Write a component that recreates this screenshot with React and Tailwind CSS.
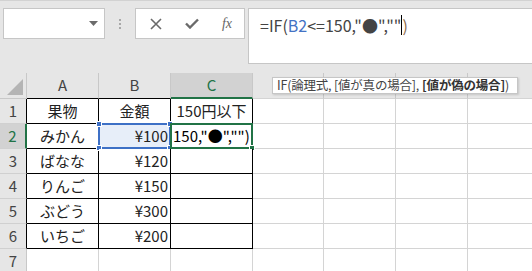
import React from "react";

const FONT = { fontFamily: '"Noto Sans CJK JP", "Noto Sans", sans-serif' };

const fruits = [
  ["果物", "金額", "150円以下"],
  ["みかん", "¥100", ""],
  ["ばなな", "¥120", ""],
  ["りんご", "¥150", ""],
  ["ぶどう", "¥300", ""],
  ["いちご", "¥200", ""],
];

function Handle({ className }) {
  return <div className={"absolute w-[6px] h-[6px] " + className} />;
}

export default function App() {
  return (
    <div className="w-[532px] h-[271px] overflow-hidden bg-[#e6e6e6] text-[#222]" style={FONT}>
      {/* formula bar area */}
      <div className="h-[73px] border-t border-[#d2d2d2] pt-[7px] pl-[3px] flex items-start">
        <div className="w-[102px] h-[31px] bg-white border border-[#c6c6c6] flex items-center justify-end pr-[6px]">
          <svg width="9" height="5" viewBox="0 0 9 5"><path d="M0 0h9L4.5 5z" fill="#6b6b6b" /></svg>
        </div>
        <div className="w-[30px] h-[31px] flex flex-col items-center justify-center gap-[2px]">
          <div className="w-[2px] h-[2px] bg-[#a8a8a8]" />
          <div className="w-[2px] h-[2px] bg-[#a8a8a8]" />
          <div className="w-[2px] h-[2px] bg-[#a8a8a8]" />
        </div>
        <div className="w-[110px] h-[31px] bg-white border border-[#c6c6c6] flex items-center">
          <div className="w-[37px] flex justify-center pl-[2px]">
            <svg width="12" height="12" viewBox="0 0 12 12"><path d="M1 1l10 10M11 1L1 11" stroke="#6a6a6a" strokeWidth="1.6" /></svg>
          </div>
          <div className="w-[37px] flex justify-center">
            <svg width="14" height="11" viewBox="0 0 14 11"><path d="M1 5.5l4 4L13 1.5" stroke="#6a6a6a" strokeWidth="2.4" fill="none" /></svg>
          </div>
          <div className="w-[34px] flex justify-center text-[14px] italic text-[#666]" style={{ fontFamily: '"Liberation Serif", serif' }}>
            fx
          </div>
        </div>
        <div className="ml-[3px] flex-1 h-[56px] bg-white border border-[#c6c6c6] border-r-0 pl-[11px] pt-[4px]">
          <div className="flex items-center text-[16px] text-[#444] leading-[24px]">
            <span>=IF(</span>
            <span className="text-[#4472c4]">B2</span>
            <span>&lt;=150,"●",""</span>
            <span className="w-[1px] h-[20px] bg-black" />
            <span className="text-[#8a6a4a]">)</span>
          </div>
        </div>
      </div>

      {/* grid */}
      <div className="relative grid grid-cols-[27px_72px_72px_82px_71px_72px_72px_64px] grid-rows-[26px_25px_25px_25px_25px_25px_25px_25px] text-[15px]">
        {/* header row */}
        <div className="relative border-r border-b border-[#c8c8c8] bg-[#e6e6e6]">
          <svg className="absolute right-[3px] bottom-[3px]" width="16" height="16" viewBox="0 0 16 16"><path d="M16 0V16H0z" fill="#b4b4b4" /></svg>
        </div>
        <div className="flex items-center justify-center border-r border-[#c8c8c8] border-b border-b-black text-[#444]">A</div>
        <div className="flex items-center justify-center border-r border-[#c8c8c8] border-b border-b-black text-[#444]">B</div>
        <div className="flex items-center justify-center border-r border-[#c8c8c8] bg-[#d2d2d2] border-b-2 border-b-[#217346] text-[#217346]">C</div>
        <div className="border-r border-[#c8c8c8] border-b border-b-[#d4d4d4]" />
        <div className="border-r border-[#c8c8c8] border-b border-b-[#d4d4d4]" />
        <div className="border-r border-[#c8c8c8] border-b border-b-[#d4d4d4]" />
        <div className="border-b border-[#d4d4d4]" />

        {fruits.map((row, i) => {
          const r = i + 1;
          const sel = r === 2;
          return (
            <React.Fragment key={r}>
              <div
                className={
                  "flex items-center justify-center border-b border-b-[#d0d0d0] " +
                  (sel ? "bg-[#d2d2d2] text-[#217346] border-r-2 border-r-[#217346]" : "bg-[#e6e6e6] text-[#444] border-r border-r-black")
                }
              >
                {r}
              </div>
              <div className="flex items-center justify-center border-r border-b border-black bg-white">{row[0]}</div>
              <div
                className={
                  "relative flex items-center border-r border-b border-black " +
                  (r === 1 ? "justify-center " : "justify-end pr-[2px] ") +
                  (sel ? "bg-[#e7eef9]" : "bg-white")
                }
              >
                {row[1]}
                {sel && (
                  <div className="absolute -left-[1px] -top-[1px] -right-[1px] -bottom-[1px] border-2 border-[#3d70c6]">
                    <Handle className="-left-[4px] -top-[4px] bg-[#3d70c6] border border-white" />
                    <Handle className="-right-[4px] -top-[4px] bg-[#3d70c6] border border-white" />
                    <Handle className="-left-[4px] -bottom-[4px] bg-[#3d70c6] border border-white" />
                    <Handle className="-right-[4px] -bottom-[4px] bg-[#3d70c6] border border-white" />
                  </div>
                )}
              </div>
              <div className={"relative flex items-center border-r border-b border-black bg-white " + (r === 1 ? "justify-center" : "justify-start pl-[2px]")}>
                {r === 1 ? row[2] : sel ? <span className="text-black">150,"●","")</span> : ""}
                {sel && (
                  <div className="absolute -left-[1px] -top-[1px] -right-[1px] -bottom-[1px] border-2 border-[#217346]">
                    <Handle className="-right-[4px] -bottom-[4px] bg-[#217346] border border-white" />
                  </div>
                )}
              </div>
              <div className="border-r border-b border-[#d4d4d4] bg-white" />
              <div className="border-r border-b border-[#d4d4d4] bg-white" />
              <div className="border-r border-b border-[#d4d4d4] bg-white" />
              <div className="border-b border-[#d4d4d4] bg-white" />
            </React.Fragment>
          );
        })}

        {/* row 7 */}
        <div className="flex items-center justify-center bg-[#e6e6e6] text-[#444] border-r border-[#c8c8c8]">7</div>
        <div className="border-r border-[#d4d4d4] bg-white" />
        <div className="border-r border-[#d4d4d4] bg-white" />
        <div className="border-r border-[#d4d4d4] bg-white" />
        <div className="border-r border-[#d4d4d4] bg-white" />
        <div className="border-r border-[#d4d4d4] bg-white" />
        <div className="border-r border-[#d4d4d4] bg-white" />
        <div className="bg-white" />

        {/* tooltip */}
        <div className="absolute left-[272px] top-[4px] w-[246px] h-[17px] bg-white border border-[#c6c6c6] shadow-[1px_1px_2px_rgba(0,0,0,0.15)] flex items-center pl-[4px] text-[12.5px] tracking-[-0.2px] text-[#444] leading-none whitespace-nowrap">
          IF(論理式, [値が真の場合], <span className="font-bold text-[#333] ml-[3px]">[値が偽の場合]</span>)
        </div>
      </div>
    </div>
  );
}
